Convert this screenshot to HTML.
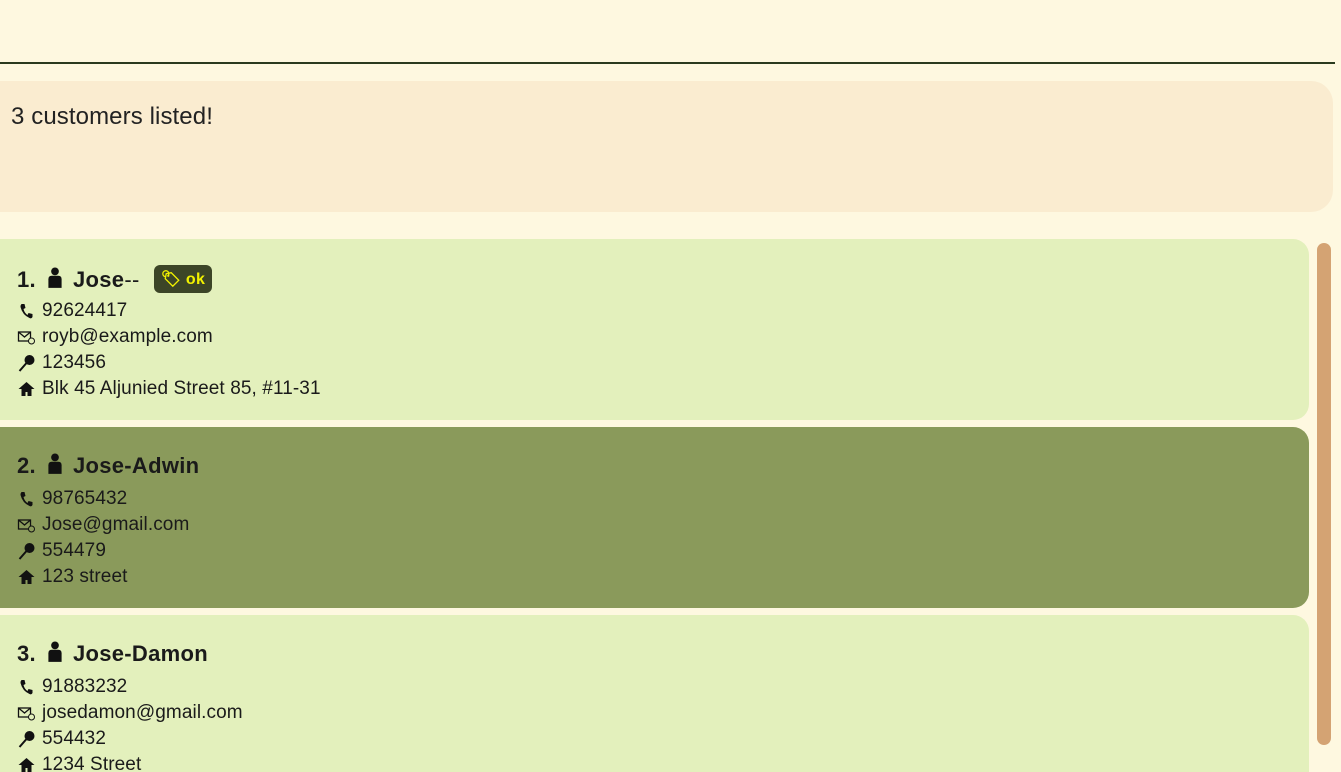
<html style="overflow:hidden;height:772px"><head><style>
body{margin:0;width:1341px;height:772px;background:#fef8e0;font-family:"Liberation Sans",sans-serif;overflow:hidden;position:relative;color:#1a1a1a}
.line{position:absolute;left:0;top:62px;width:1335px;height:2px;background:#2a3a1e}
.res{position:absolute;left:0;top:81px;width:1333px;height:131px;background:#faecd0;border-radius:0 22px 22px 0}
.res span{position:absolute;left:11px;top:22px;font-size:24px;color:#222;letter-spacing:0.1px}
.card{position:absolute;left:0;width:1309px;height:181px;background:#e3f0bc;border-radius:0 16px 16px 0;overflow:hidden}
.card.sel{background:#8a9a5b}
.name{position:absolute;left:17px;top:26px;font-size:22px;font-weight:bold;letter-spacing:0.3px}
.name svg{margin:0 8px 0 9px}
.row{position:absolute;left:17px;font-size:19px;display:flex;align-items:center;letter-spacing:0.1px}
.row svg{width:19px;height:18px;margin-right:6px}
.tag{display:inline-block;background:#3c4527;color:#f2f200;font-size:16px;border-radius:6px;padding:4px 7px;margin-left:14px;vertical-align:3px;font-weight:bold}
.sb{position:absolute;left:1317px;top:243px;width:14px;height:502px;background:#d4a373;border-radius:7px}
</style></head><body>
<div class="line"></div>
<div class="res"><span>3 customers listed!</span></div>

<div class="card" style="top:239px">
<div class="name">1.<svg width="20" height="22" viewBox="0 0 18 20" style="vertical-align:-2px"><circle cx="9" cy="4" r="3.5" fill="#111"/><path d="M3 19V11q0-3 3-3h6q3 0 3 3v8z" fill="#111"/></svg>Jose<span style="font-weight:normal">--</span><span class="tag">🏷 ok</span></div>
<div class="row" style="top:61px"><svg viewBox="0 0 18 18"><path d="M4 2l3 0 1 4-2 1q1 4 4 6l1-2 4 1 0 3q-1 2-3 1Q5 13 3 5q0-2 1-3z" fill="#111"/></svg>92624417</div>
<div class="row" style="top:87px"><svg viewBox="0 0 18 18"><rect x="1" y="4" width="12" height="9" fill="none" stroke="#111" stroke-width="1.3"/><path d="M1 4l6 5 6-5" fill="none" stroke="#111" stroke-width="1.3"/><circle cx="14" cy="13" r="3" fill="#e3f0bc" stroke="#111"/></svg>royb@example.com</div>
<div class="row" style="top:113px"><svg viewBox="0 0 18 18"><circle cx="12" cy="6" r="5" fill="#111"/><path d="M9 9L2 17" stroke="#111" stroke-width="2"/></svg>123456</div>
<div class="row" style="top:139px"><svg viewBox="0 0 18 18"><path d="M9 2L1 9h3v7h4v-4h2v4h4V9h3z" fill="#111"/></svg>Blk 45 Aljunied Street 85, #11-31</div>
</div>

<div class="card sel" style="top:427px">
<div class="name">2.<svg width="20" height="22" viewBox="0 0 18 20" style="vertical-align:-2px"><circle cx="9" cy="4" r="3.5" fill="#111"/><path d="M3 19V11q0-3 3-3h6q3 0 3 3v8z" fill="#111"/></svg>Jose-Adwin</div>
<div class="row" style="top:61px"><svg viewBox="0 0 18 18"><path d="M4 2l3 0 1 4-2 1q1 4 4 6l1-2 4 1 0 3q-1 2-3 1Q5 13 3 5q0-2 1-3z" fill="#111"/></svg>98765432</div>
<div class="row" style="top:87px"><svg viewBox="0 0 18 18"><rect x="1" y="4" width="12" height="9" fill="none" stroke="#111" stroke-width="1.3"/><path d="M1 4l6 5 6-5" fill="none" stroke="#111" stroke-width="1.3"/><circle cx="14" cy="13" r="3" fill="#8a9a5b" stroke="#111"/></svg>Jose@gmail.com</div>
<div class="row" style="top:113px"><svg viewBox="0 0 18 18"><circle cx="12" cy="6" r="5" fill="#111"/><path d="M9 9L2 17" stroke="#111" stroke-width="2"/></svg>554479</div>
<div class="row" style="top:139px"><svg viewBox="0 0 18 18"><path d="M9 2L1 9h3v7h4v-4h2v4h4V9h3z" fill="#111"/></svg>123 street</div>
</div>

<div class="card" style="top:615px;height:157px;border-radius:0 16px 0 0">
<div class="name">3.<svg width="20" height="22" viewBox="0 0 18 20" style="vertical-align:-2px"><circle cx="9" cy="4" r="3.5" fill="#111"/><path d="M3 19V11q0-3 3-3h6q3 0 3 3v8z" fill="#111"/></svg>Jose-Damon</div>
<div class="row" style="top:61px"><svg viewBox="0 0 18 18"><path d="M4 2l3 0 1 4-2 1q1 4 4 6l1-2 4 1 0 3q-1 2-3 1Q5 13 3 5q0-2 1-3z" fill="#111"/></svg>91883232</div>
<div class="row" style="top:87px"><svg viewBox="0 0 18 18"><rect x="1" y="4" width="12" height="9" fill="none" stroke="#111" stroke-width="1.3"/><path d="M1 4l6 5 6-5" fill="none" stroke="#111" stroke-width="1.3"/><circle cx="14" cy="13" r="3" fill="#e3f0bc" stroke="#111"/></svg>josedamon@gmail.com</div>
<div class="row" style="top:113px"><svg viewBox="0 0 18 18"><circle cx="12" cy="6" r="5" fill="#111"/><path d="M9 9L2 17" stroke="#111" stroke-width="2"/></svg>554432</div>
<div class="row" style="top:139px"><svg viewBox="0 0 18 18"><path d="M9 2L1 9h3v7h4v-4h2v4h4V9h3z" fill="#111"/></svg>1234 Street</div>
</div>
<div class="sb"></div>
</body></html>
